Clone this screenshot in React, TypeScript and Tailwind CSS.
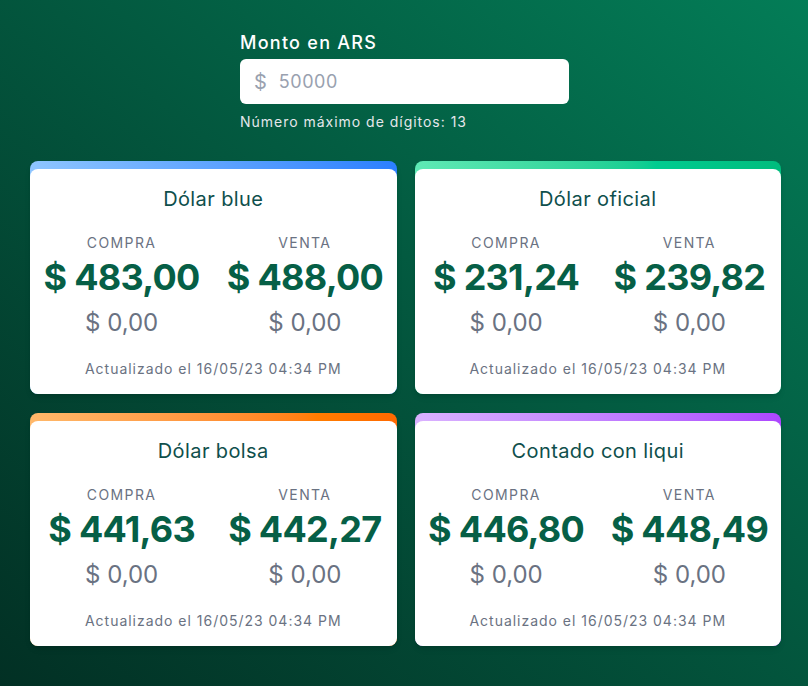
import React from 'react';

type Rate = {
  name: string;
  compra: string;
  venta: string;
  bar: string;
};

const rates: Rate[] = [
  { name: 'Dólar blue', compra: '$ 483,00', venta: '$ 488,00', bar: 'bg-linear-to-r from-blue-300 to-blue-500' },
  { name: 'Dólar oficial', compra: '$ 231,24', venta: '$ 239,82', bar: 'bg-linear-to-r from-emerald-300 to-emerald-500' },
  { name: 'Dólar bolsa', compra: '$ 441,63', venta: '$ 442,27', bar: 'bg-linear-to-r from-orange-300 to-orange-500' },
  { name: 'Contado con liqui', compra: '$ 446,80', venta: '$ 448,49', bar: 'bg-linear-to-r from-purple-300 to-purple-500' },
];

function Column({ label, value }: { label: string; value: string }) {
  return (
    <div className="flex flex-col items-center">
      <span className="text-sm leading-5 uppercase tracking-[0.1em] text-gray-500">{label}</span>
      <span className="mt-1 text-4xl leading-10 font-bold tracking-[-0.02em] text-[#065f46]">{value}</span>
      <span className="mt-[10px] text-2xl leading-8 text-gray-500">$ 0,00</span>
    </div>
  );
}

function RateCard({ rate }: { rate: Rate }) {
  return (
    <div className={`rounded-lg pt-2 shadow-md ${rate.bar}`}>
      <div className="rounded-lg bg-white pt-4 pb-[15px] text-center">
        <h2 className="text-xl leading-7 tracking-[0.02em] text-[#0f4f4c]">{rate.name}</h2>
        <div className="mt-5 grid grid-cols-2">
          <Column label="Compra" value={rate.compra} />
          <Column label="Venta" value={rate.venta} />
        </div>
        <p className="mt-5 text-sm leading-5 tracking-[0.07em] text-gray-500">Actualizado el 16/05/23 04:34 PM</p>
      </div>
    </div>
  );
}

export default function App() {
  return (
    <div
      className="min-h-screen bg-linear-to-tr from-[#023024] to-[#037d57] pt-[29px] pb-10"
      style={{ fontFamily: 'Inter, "Noto Sans", sans-serif' }}
    >
      <div className="mx-auto w-[330px] pl-[1px]">
        <label className="block text-lg leading-7 font-medium tracking-[0.07em] text-white">Monto en ARS</label>
        <div className="mt-[2px] flex h-[45px] items-center rounded-md bg-white px-[14px]">
          <span className="text-xl text-gray-400">$</span>
          <input
            className="ml-[12px] w-full bg-transparent text-lg tracking-[0.03em] text-gray-700 outline-none placeholder:text-gray-400"
            placeholder="50000"
          />
        </div>
        <p className="mt-[8px] text-sm leading-5 tracking-[0.07em] text-gray-200">Número máximo de dígitos: 13</p>
      </div>

      <div className="mt-[29px] grid grid-cols-2 gap-x-[18px] gap-y-[19px] pl-[30px] pr-[27px]">
        {rates.map((r) => (
          <RateCard key={r.name} rate={r} />
        ))}
      </div>
    </div>
  );
}
